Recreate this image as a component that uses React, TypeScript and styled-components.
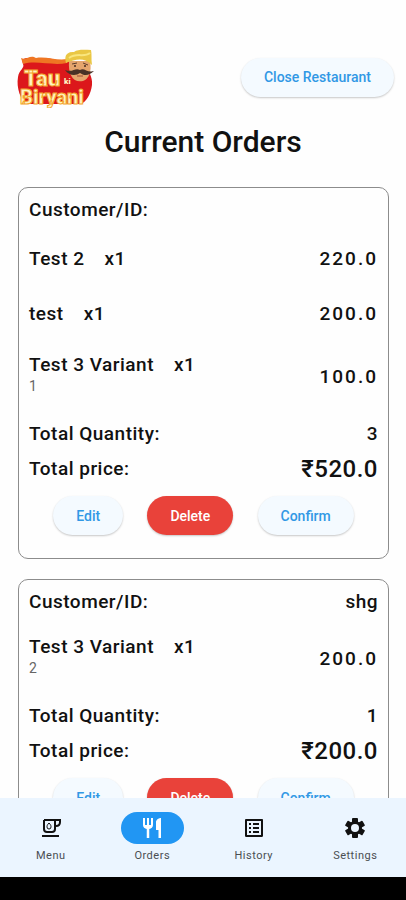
import React from "react";
import styled, { createGlobalStyle, css } from "styled-components";
import { MdListAlt, MdRestaurant } from "react-icons/md";

const GlobalStyle = createGlobalStyle`
  *, *::before, *::after { box-sizing: border-box; }
  body {
    margin: 0;
    background: #fff;
    color: #111;
    font-family: Roboto, "Noto Sans", sans-serif;
  }
`;

const Screen = styled.div`
  display: flex;
  flex-direction: column;
  height: 100vh;
  background: #fefefe;
`;

const Header = styled.header`
  display: flex;
  align-items: center;
  justify-content: space-between;
  padding: 46px 12px 0 16px;
`;

const Title = styled.h1`
  margin: 16px 0 27px;
  font-size: 30px;
  line-height: 36px;
  font-weight: 500;
  text-align: center;
`;

const OrderList = styled.main`
  flex: 1;
  min-height: 0;
  display: flex;
  flex-direction: column;
  gap: 20px;
  padding: 0 17px 20px 18px;
  overflow-y: auto;
  scrollbar-width: none;
`;

const Card = styled.article`
  flex: none;
  padding: 10px 10px 23px;
  border: 1px solid #8c8c8c;
  border-radius: 10px;
`;

const Row = styled.div<{ $tall?: boolean }>`
  display: flex;
  align-items: center;
  justify-content: space-between;
  height: ${(p) => (p.$tall ? 35 : 24)}px;
`;

const Label = styled.span`
  font-size: 19px;
  line-height: 24px;
  font-weight: 500;
  letter-spacing: 0.5px;
`;

const Items = styled.ul`
  margin: 9px 0 4px;
  padding: 0;
  list-style: none;
`;

const Item = styled.li<{ $variant: boolean }>`
  display: flex;
  align-items: center;
  justify-content: space-between;
  height: ${(p) => (p.$variant ? 71 : 55)}px;
`;

const ItemName = styled(Label)`
  display: flex;
  gap: 20px;
`;

const Variant = styled.div`
  padding-bottom: 5px;
  font-size: 14px;
  line-height: 18px;
  color: #666;
`;

const Price = styled.span`
  font-size: 19px;
  font-weight: 500;
  letter-spacing: 2px;
`;

const Total = styled.strong`
  font-size: 24px;
  font-weight: 500;
  letter-spacing: 0.5px;
`;

const Actions = styled.div`
  display: flex;
  justify-content: space-evenly;
  margin-top: 10px;
`;

const PillButton = styled.button<{ $danger?: boolean }>`
  height: 39px;
  padding: 0 23px;
  border: 0;
  border-radius: 20px;
  font-family: inherit;
  font-size: 14px;
  font-weight: 500;
  color: #3198e5;
  background: #f4faff;
  box-shadow: 0 1px 2px rgba(0, 0, 0, 0.22);
  cursor: pointer;
  ${(p) =>
    p.$danger &&
    css`
      color: #fff;
      background: #e9423a;
    `}
`;

const NavBar = styled.nav`
  flex: none;
  display: grid;
  grid-template-columns: repeat(4, 1fr);
  height: 79px;
  padding-top: 14px;
  background: #ebf5ff;
`;

const NavLink = styled.a`
  display: flex;
  flex-direction: column;
  align-items: center;
  gap: 4px;
  font-size: 11px;
  line-height: 16px;
  letter-spacing: 0.5px;
  color: #4a4e52;
  text-decoration: none;
`;

const Indicator = styled.span<{ $active: boolean }>`
  display: grid;
  place-items: center;
  width: 63px;
  height: 32px;
  border-radius: 16px;
  color: ${(p) => (p.$active ? "#fff" : "#111")};
  background: ${(p) => (p.$active ? "#2196f3" : "transparent")};
`;

const SystemBar = styled.div`
  flex: none;
  height: 23px;
  background: #000;
`;

const Logo = () => (
  <svg width="78" height="62" viewBox="0 -3 78 62" role="img" aria-label="Tau ki Biryani">
    <path
      d="M6 11 C12 6 18 12 24 10 C32 7 43 13 51 11 L73 15 C71 23 77 27 76 36 C75 45 70 53 65 55 L10 55 C5 51 0 39 2 28 C3 21 9 19 7 15 Z"
      fill="#dc171b"
    />
    <path d="M5 9 C10 12 14 5 20 9 C30 7 41 12 51 10 L51 14 C36 17 20 11 7 15 Z" fill="#ef7623" />
    <path d="M53 12 H74 C76 22 73 30 67 32 C57 34 52 26 53 12 Z" fill="#e5a56d" />
    <path d="M50 14 C47 3 55 3 58 3 C62 0 69 1 75 1 C76 5 75 10 76 16 C68 8 60 10 50 14 Z" fill="#eac744" />
    <path d="M53 9 C61 3 68 9 74 4" fill="none" stroke="#f9e67e" strokeWidth="2" />
    <path d="M56 15 L61 14 M67 14 L72 16" stroke="#633f2b" strokeWidth="1" />
    <circle cx="59" cy="17" r="1" fill="#442b20" />
    <circle cx="69" cy="17" r="1" fill="#442b20" />
    <path
      d="M64 21 C59 18 57 24 49 21 C53 27 60 27 64 24 C68 27 73 27 78 22 C71 24 68 18 64 21 Z"
      fill="#493126"
    />
    <path d="M61 27 H67" stroke="#9c4d37" strokeWidth="1" />
    <g fontFamily="Roboto, sans-serif" fontWeight="900" fill="#fff3c2" stroke="#f3a62d" strokeWidth="1">
      <text x="8" y="37" fontSize="22">Tau</text>
      <text x="48" y="35" fontSize="8" stroke="none">ki</text>
      <text x="4" y="55" fontSize="20">Biryani</text>
    </g>
  </svg>
);

const CupIcon = () => (
  <svg width="20" height="20" viewBox="0 0 20 20" fill="none" stroke="currentColor" strokeWidth="2" aria-hidden="true">
    <path d="M3 2 H19 V4 Q19 8 15 8 H14 M14 2 V11 Q14 14 11 14 H6 Q3 14 3 11 V2 M1 18 H18" />
    <path d="M8 5 C6 7 6 8 6 9 A2 2 0 0 0 10 9 C10 8 10 7 8 5 Z" strokeWidth="1" />
  </svg>
);

const GearIcon = () => (
  <svg width="20" height="20" viewBox="0 0 20 20" aria-hidden="true">
    <g fill="currentColor">
      <rect x="7" y="0" width="6" height="20" rx="1" />
      <rect x="7" y="0" width="6" height="20" rx="1" transform="rotate(60 10 10)" />
      <rect x="7" y="0" width="6" height="20" rx="1" transform="rotate(120 10 10)" />
      <circle cx="10" cy="10" r="7" />
    </g>
    <circle cx="10" cy="10" r="4" fill="#ebf5ff" />
  </svg>
);

type OrderItem = { name: string; count: number; price: string; variant?: string };
type Order = { customer: string; items: OrderItem[]; quantity: number; total: string };

const orders: Order[] = [
  {
    customer: "",
    items: [
      { name: "Test 2", count: 1, price: "220.0" },
      { name: "test", count: 1, price: "200.0" },
      { name: "Test 3 Variant", count: 1, price: "100.0", variant: "1" },
    ],
    quantity: 3,
    total: "₹520.0",
  },
  {
    customer: "shg",
    items: [{ name: "Test 3 Variant", count: 1, price: "200.0", variant: "2" }],
    quantity: 1,
    total: "₹200.0",
  },
];

const tabs = [
  { label: "Menu", icon: <CupIcon /> },
  { label: "Orders", icon: <MdRestaurant size={24} /> },
  { label: "History", icon: <MdListAlt size={24} /> },
  { label: "Settings", icon: <GearIcon /> },
];

const OrderCard = ({ order }: { order: Order }) => (
  <Card>
    <Row>
      <Label>Customer/ID:</Label>
      <Label>{order.customer}</Label>
    </Row>
    <Items>
      {order.items.map((item) => (
        <Item key={item.name} $variant={Boolean(item.variant)}>
          <div>
            <ItemName>
              <span>{item.name}</span>
              <span>x{item.count}</span>
            </ItemName>
            {item.variant && <Variant>{item.variant}</Variant>}
          </div>
          <Price>{item.price}</Price>
        </Item>
      ))}
    </Items>
    <Row $tall>
      <Label>Total Quantity:</Label>
      <Label>{order.quantity}</Label>
    </Row>
    <Row $tall>
      <Label>Total price:</Label>
      <Total>{order.total}</Total>
    </Row>
    <Actions>
      <PillButton type="button">Edit</PillButton>
      <PillButton type="button" $danger>Delete</PillButton>
      <PillButton type="button">Confirm</PillButton>
    </Actions>
  </Card>
);

export default function App() {
  return (
    <>
      <GlobalStyle />
      <Screen>
        <Header>
          <Logo />
          <PillButton type="button">Close Restaurant</PillButton>
        </Header>
        <Title>Current Orders</Title>
        <OrderList>
          {orders.map((order) => (
            <OrderCard key={order.total} order={order} />
          ))}
        </OrderList>
        <NavBar aria-label="Main">
          {tabs.map(({ label, icon }) => (
            <NavLink key={label} href={`#${label.toLowerCase()}`} aria-current={label === "Orders" ? "page" : undefined}>
              <Indicator $active={label === "Orders"}>{icon}</Indicator>
              {label}
            </NavLink>
          ))}
        </NavBar>
        <SystemBar />
      </Screen>
    </>
  );
}
